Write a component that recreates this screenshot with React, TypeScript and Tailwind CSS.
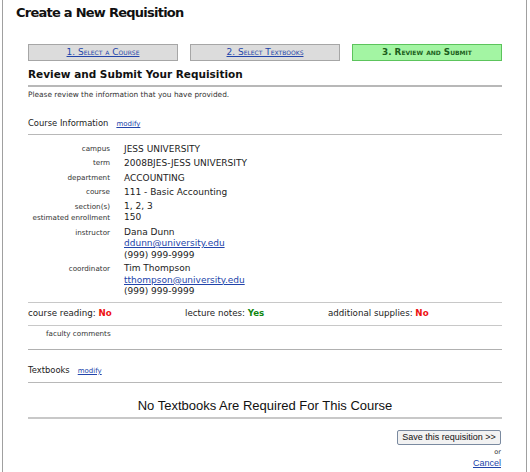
export default function App() {
  const rows: [string, string][] = [
    ["campus", "JESS UNIVERSITY"],
    ["term", "2008BJES-JESS UNIVERSITY"],
    ["department", "ACCOUNTING"],
    ["course", "111 - Basic Accounting"],
  ];

  return (
    <div className="h-[472px] w-[530px] bg-white" style={{ fontFamily: '"DejaVu Sans", Verdana, sans-serif' }}>
      <div className="ml-[2px] h-[472px] w-[525px] border-x border-[#a0a0a0] text-[#222]">
        <h1 className="pl-[13px] pt-[4px] text-[13px] font-bold leading-[18px] tracking-[-0.75px] text-[#111]">
          Create a New Requisition
        </h1>

        <div className="ml-[25px] w-[474px]">
          {/* steps */}
          <div className="mt-[22px] flex gap-[12px]">
            <div className="flex h-[17px] w-[150px] items-center justify-center border border-[#a6a6a6] bg-[#dcdcdc]">
              <a href="#" className="text-[9px] text-[#2244aa] underline [font-variant:small-caps]">
                1. Select a Course
              </a>
            </div>
            <div className="flex h-[17px] w-[150px] items-center justify-center border border-[#a6a6a6] bg-[#dcdcdc]">
              <a href="#" className="text-[9px] text-[#2244aa] underline [font-variant:small-caps]">
                2. Select Textbooks
              </a>
            </div>
            <div className="flex h-[17px] w-[150px] items-center justify-center border border-[#5cc45c] bg-[#a3f5a3]">
              <span className="text-[8.8px] font-bold text-[#1c5e1c] [font-variant:small-caps]">
                3. Review and Submit
              </span>
            </div>
          </div>

          <h2 className="mt-[6px] border-b-2 border-[#b8b8b8] pb-[3px] text-[10.5px] font-bold leading-[15px] text-[#111]">
            Review and Submit Your Requisition
          </h2>
          <p className="mt-[3px] text-[7.4px] leading-[10px] text-[#333]">
            Please review the information that you have provided.
          </p>

          {/* course info */}
          <div className="mt-[17px] flex items-baseline gap-[8px] border-b border-[#b8b8b8] pb-[4px]">
            <span className="text-[8.4px] leading-[12px] text-[#222]">Course Information</span>
            <a href="#" className="text-[7px] text-[#2244aa] underline">modify</a>
          </div>

          <div className="mt-[7px] grid grid-cols-[82px_1fr] gap-x-[14px] text-[9px]">
            {rows.map(([k, v]) => (
              <div key={k} className="contents">
                <div className="text-right text-[7.2px] leading-[14.5px] text-[#333]">{k}</div>
                <div className="leading-[14.5px] text-[#222]">{v}</div>
              </div>
            ))}
            <div className="pt-[1px] text-right text-[7.2px] leading-[11px] text-[#333]">section(s)</div>
            <div className="pt-[1px] leading-[11px] text-[#222]">1, 2, 3</div>
            <div className="text-right text-[7.2px] leading-[11px] text-[#333]">estimated enrollment</div>
            <div className="leading-[11px] text-[#222]">150</div>
            <div className="pt-[4px] text-right text-[7.2px] leading-[11.5px] text-[#333]">instructor</div>
            <div className="pt-[4px] leading-[11.5px] text-[#222]">
              <div>Dana Dunn</div>
              <a href="#" className="text-[#2244aa] underline">ddunn@university.edu</a>
              <div>(999) 999-9999</div>
            </div>
            <div className="pt-[2px] text-right text-[7.2px] leading-[11.5px] text-[#333]">coordinator</div>
            <div className="pt-[2px] leading-[11.5px] text-[#222]">
              <div>Tim Thompson</div>
              <a href="#" className="text-[#2244aa] underline">tthompson@university.edu</a>
              <div>(999) 999-9999</div>
            </div>
          </div>

          <div className="mt-[4px] flex h-[24px] items-center border-y border-[#c8c8c8] text-[8.7px]">
            <div className="w-[157px]">
              course reading: <span className="font-bold text-[#ee1111]">No</span>
            </div>
            <div className="w-[143px]">
              lecture notes: <span className="font-bold text-[#118811]">Yes</span>
            </div>
            <div>
              additional supplies: <span className="font-bold text-[#ee1111]">No</span>
            </div>
          </div>
          <div className="h-[24px] border-b border-[#b0b0b0] pl-[18px] pt-[3px] text-[7.2px] leading-[10px] text-[#333]">
            faculty comments
          </div>

          {/* textbooks */}
          <div className="mt-[14px] flex items-baseline gap-[8px] border-b border-[#b8b8b8] pb-[6px]">
            <span className="text-[8.4px] leading-[12px] text-[#222]">Textbooks</span>
            <a href="#" className="text-[7px] text-[#2244aa] underline">modify</a>
          </div>

          <div
            className="mt-[15px] border-b-2 border-[#c8c8c8] pb-[3px] text-center text-[13px] leading-[16px] text-[#111]"
            style={{ fontFamily: '"Liberation Sans", Arial, sans-serif' }}
          >
            No Textbooks Are Required For This Course
          </div>

          <div className="mt-[11px] flex flex-col items-end pr-[1px]">
            <button
              className="h-[15px] w-[104px] whitespace-nowrap rounded-[2px] border border-[#7a8aa0] bg-[#f2f2f2] text-[9px] leading-[13px] text-[#111]"
              style={{ fontFamily: '"Liberation Sans", Arial, sans-serif' }}
            >
              Save this requisition &gt;&gt;
            </button>
            <span className="mt-[3px] text-[6.5px] leading-[9px] text-[#333]">or</span>
            <a
              href="#"
              className="text-[9px] leading-[12px] text-[#2244aa] underline"
              style={{ fontFamily: '"Liberation Sans", Arial, sans-serif' }}
            >
              Cancel
            </a>
          </div>
        </div>
      </div>
    </div>
  );
}
